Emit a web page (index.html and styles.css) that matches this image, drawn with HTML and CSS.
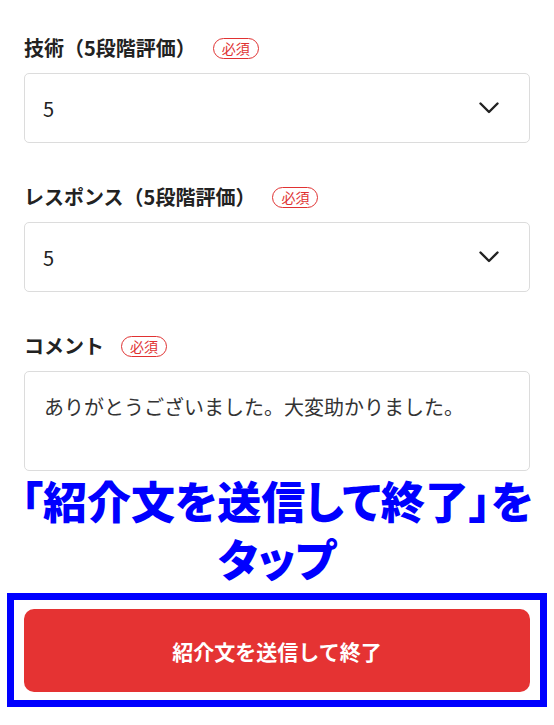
FILE: index.html
```html
<!DOCTYPE html>
<html lang="ja">
<head>
<meta charset="utf-8">
<link rel="stylesheet" href="styles.css">
</head>
<body>
<div class="form">
  <div class="field">
    <div class="label-row">
      <span class="label">技術（5段階評価）</span>
      <span class="badge">必須</span>
    </div>
    <div class="select">
      <span class="value">5</span>
      <svg class="chevron" width="20" height="12" viewBox="0 0 20 12"><path d="M1.5 1.5 L10 10 L18.5 1.5" fill="none" stroke="#222" stroke-width="2.4" stroke-linecap="round" stroke-linejoin="round"/></svg>
    </div>
  </div>
  <div class="field">
    <div class="label-row">
      <span class="label">レスポンス（5段階評価）</span>
      <span class="badge">必須</span>
    </div>
    <div class="select">
      <span class="value">5</span>
      <svg class="chevron" width="20" height="12" viewBox="0 0 20 12"><path d="M1.5 1.5 L10 10 L18.5 1.5" fill="none" stroke="#222" stroke-width="2.4" stroke-linecap="round" stroke-linejoin="round"/></svg>
    </div>
  </div>
  <div class="field last">
    <div class="label-row">
      <span class="label">コメント</span>
      <span class="badge">必須</span>
    </div>
    <div class="textarea">ありがとうございました。大変助かりました。</div>
  </div>
  <div class="callout">
    <div class="callout-line">「紹介文を送信して終了」を</div>
    <div class="callout-line">タップ</div>
  </div>
  <div class="frame">
    <div class="submit">紹介文を送信して終了</div>
  </div>
</div>
</body>
</html>
```
FILE: styles.css
```css
html, body {
  margin: 0;
  padding: 0;
  background: #fff;
}
body {
  font-family: "Noto Sans CJK JP", "Noto Sans", sans-serif;
  color: #222;
  width: 554px;
  height: 725px;
  overflow: hidden;
}
.form {
  padding: 35px 24px 0;
}
.field {
  margin-bottom: 41px;
}
.field.last {
  margin-bottom: 0;
}
.label-row {
  display: flex;
  align-items: center;
  height: 26px;
  margin-bottom: 12px;
  gap: 17px;
}
.label {
  font-size: 20px;
  font-weight: 700;
  line-height: 26px;
  color: #222;
}
.badge {
  font-size: 14px;
  line-height: 19px;
  padding: 0 8px;
  border: 1.5px solid #e03232;
  border-radius: 12px;
  color: #e03232;
}
.select {
  box-sizing: border-box;
  height: 70px;
  border: 1px solid #dcdcdc;
  border-radius: 5px;
  display: flex;
  align-items: center;
  justify-content: space-between;
  padding: 0 30px 0 18px;
}
.value {
  font-size: 20px;
  color: #222;
}
.chevron {
  display: block;
}
.textarea {
  box-sizing: border-box;
  height: 100px;
  border: 1px solid #dcdcdc;
  border-radius: 5px;
  padding: 20px 19px;
  font-size: 20px;
  line-height: 30px;
  color: #333;
}
.callout {
  text-align: center;
  color: #0000ff;
  font-size: 44px;
  font-weight: 900;
  font-feature-settings: "palt";
  margin: 0 -20px;
}
.callout-line {
  height: 58px;
  line-height: 58px;
  overflow: visible;
}
.frame {
  margin: 6px -17px 0;
  border: 7px solid #0000ff;
  padding: 9px 10px 8px;
}
.submit {
  height: 83px;
  border-radius: 10px;
  background: #e53333;
  color: #fff;
  font-size: 21px;
  font-weight: 700;
  display: flex;
  align-items: center;
  justify-content: center;
}
```
